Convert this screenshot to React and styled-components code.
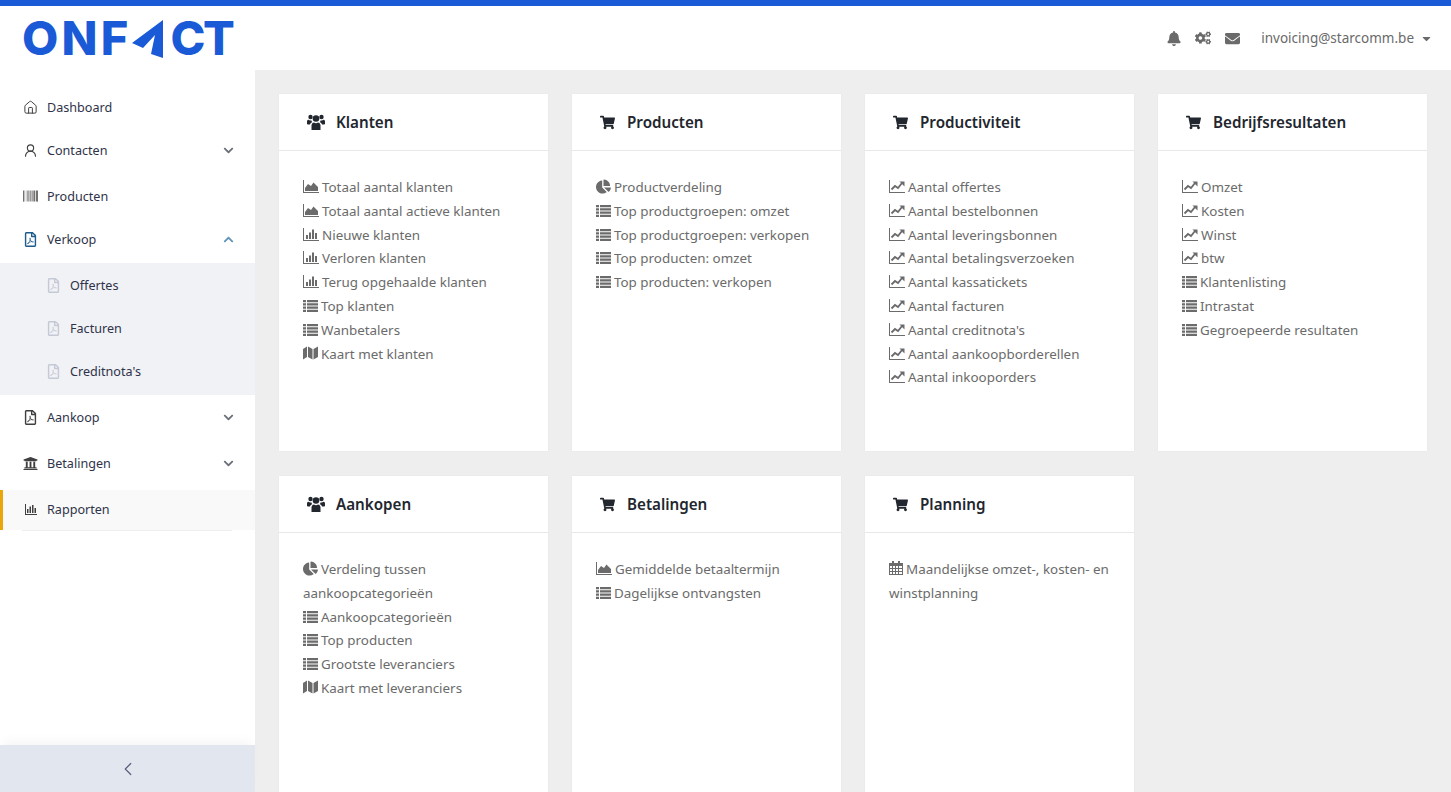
import React from 'react'
import styled, { createGlobalStyle } from 'styled-components'
import {
  FaBell, FaCogs, FaEnvelope, FaCaretDown, FaShoppingCart, FaChartPie,
  FaBarcode, FaRegFilePdf, FaUniversity, FaChevronDown, FaChevronUp,
} from 'react-icons/fa'
import { Home, UserRound, ChevronLeft } from 'lucide-react'

const GlobalStyle = createGlobalStyle`
  html, body { margin: 0; padding: 0; height: 100%; overflow: hidden; }
  body { font-family: "Noto Sans", "Open Sans", sans-serif; background: #eeeeee; }
  * { box-sizing: border-box; }
`

const Page = styled.div`
  height: 100vh;
  display: flex;
  flex-direction: column;
  overflow: hidden;
`

const Header = styled.header`
  height: 70px;
  flex: none;
  border-top: 6px solid #1a5ad7;
  background: #fff;
  display: flex;
  align-items: center;
  justify-content: space-between;
  padding: 0 18px 0 22px;
`

const Logo = styled.div`
  display: flex;
  align-items: center;
  color: #1a5ad7;
  font-family: Inter, "Liberation Sans", sans-serif;
  font-weight: 800;
  font-size: 47px;
  line-height: 36px;
  height: 40px;
`

const LogoText = styled.span`
  letter-spacing: ${p => p.$spacing}px;
`

const LogoMark = styled.svg`
  margin: 2px 6px 0 1px;
  flex: none;
`

const HeaderRight = styled.div`
  display: flex;
  align-items: center;
  color: #6a6a6a;
  font-size: 13.5px;
`

const HeaderIcon = styled.span`
  display: flex;
  width: ${p => p.$w}px;
  margin-left: ${p => p.$ml || 0}px;
  justify-content: center;
  font-size: ${p => p.$size}px;
`

const UserName = styled.span`
  margin-left: 21px;
`

const Caret = styled.span`
  display: flex;
  margin-left: 6px;
  font-size: 13px;
`

const Body = styled.div`
  flex: 1;
  display: flex;
  min-height: 0;
`

const Sidebar = styled.aside`
  width: 255px;
  flex: none;
  background: #fff;
  display: flex;
  flex-direction: column;
  padding-top: 15px;
`

const NavItem = styled.div`
  height: ${p => p.$h}px;
  flex: none;
  display: flex;
  align-items: center;
  padding-left: 23px;
  padding-right: 21px;
  font-size: 12.6px;
  color: #2f3349;
  margin-bottom: ${p => p.$mb || 0}px;
`

const ActiveItem = styled(NavItem)`
  background: #f9f9f9;
  border-left: 3px solid #e8a60c;
  padding-left: 20px;
  padding-bottom: 2px;
  position: relative;
  &::after {
    content: '';
    position: absolute;
    left: 19px;
    right: 23px;
    bottom: -1px;
    height: 1px;
    background: #eceef2;
  }
`

const NavIcon = styled.span`
  width: 24px;
  flex: none;
  display: flex;
  justify-content: center;
  padding-right: 9px;
  color: ${p => p.$color || '#3f3f3f'};
  font-size: ${p => p.$size || 14}px;
`

const NavLabel = styled.span`
  flex: 1;
`

const Chevron = styled.span`
  display: flex;
  font-size: 11px;
  color: ${p => p.$color || '#6b6f7a'};
`

const SubMenu = styled.div`
  flex: none;
  background: #f1f2f6;
  padding: 1px 0 2px;
`

const SubItem = styled.div`
  height: 43px;
  display: flex;
  align-items: center;
  padding-left: 47px;
  font-size: 12.6px;
  color: #2f3349;
`

const SubIcon = styled.span`
  width: 24px;
  display: flex;
  color: #c4c9d5;
  font-size: 15px;
  margin-left: -1px;
  padding-right: 1px;
`

const Collapse = styled.div`
  margin-top: auto;
  height: 47px;
  flex: none;
  background: #e2e6ee;
  box-shadow: 0 -8px 10px -4px rgba(0, 0, 0, 0.04);
  display: flex;
  align-items: center;
  justify-content: center;
  color: #5b5f7c;
`

const Content = styled.main`
  flex: 1;
  padding: 24px 24px 0;
  overflow: hidden;
  display: grid;
  grid-template-columns: repeat(4, 269px);
  grid-auto-rows: 357px;
  column-gap: 24px;
  row-gap: 25px;
`

const Card = styled.section`
  background: #fff;
  box-shadow: 0 0 1px rgba(0, 0, 0, 0.08);
`

const CardHead = styled.div`
  height: 57px;
  border-bottom: 1px solid #e7e8ea;
  display: flex;
  align-items: center;
  padding-left: 28px;
  font-size: 15.2px;
  font-weight: 600;
  color: #22262e;
`

const HeadIcon = styled.span`
  display: flex;
  margin-right: ${p => p.$gap}px;
  font-size: ${p => p.$size}px;
`

const CardBody = styled.div`
  padding: 25px 20px 24px 24px;
`

const Line = styled.div`
  font-size: 13.4px;
  line-height: 23.8px;
  color: #6b6b6b;
`

const ListIcon = styled.svg`
  display: inline-block;
  vertical-align: -1px;
  margin-right: 3px;
  fill: currentColor;
`

const PieWrap = styled.span`
  display: inline-flex;
  vertical-align: -2px;
  margin-right: 3px;
  font-size: 15px;
`

const Area = () => (
  <ListIcon width="16" height="13" viewBox="0 0 16 13">
    <path d="M0 0h1v12h15v1H0z" />
    <path d="M2 11V8l3-4 3 2 2.500-3.500L15 7v4z" />
  </ListIcon>
)
const Bars = () => (
  <ListIcon width="16" height="13" viewBox="0 0 16 13">
    <path d="M0 0h1v12h15v1H0z" />
    <path d="M3 7h2v4H3zM6 4.500h2V11H6zM9 1.500h2V11H9zM12 5h2v6h-2z" />
  </ListIcon>
)
const Trend = () => (
  <ListIcon width="16" height="13" viewBox="0 0 16 13">
    <path d="M0 0h1v12h15v1H0z" />
    <path d="M2.500 9.500 6 6l3 2 4-5" fill="none" stroke="currentColor" strokeWidth="1.8" />
    <path d="M10.500 1.500H15.500V6.500z" />
  </ListIcon>
)
const Rows = () => (
  <ListIcon width="15" height="12" viewBox="0 0 15 12">
    <path d="M0 0h3v2.300H0zM4 0h11v2.300H4zM0 3.200h3v2.300H0zM4 3.200h11v2.300H4zM0 6.500h3v2.300H0zM4 6.500h11v2.300H4zM0 9.700h3V12H0zM4 9.700h11V12H4z" />
  </ListIcon>
)
const Calendar = () => (
  <ListIcon width="14" height="14" viewBox="0 0 14 14">
    <path fillRule="evenodd" d="M3 0h2v2h4V0h2v2h3v12H0V2h3zM1 5v2h2V5zm3 0v2h2V5zm3 0v2h2V5zm3 0v2h3V5zM1 8v2h2V8zm3 0v2h2V8zm3 0v2h2V8zm3 0v2h3V8zm-9 3v2h2v-2zm3 0v2h2v-2zm3 0v2h2v-2zm3 0v2h3v-2z" />
  </ListIcon>
)
const MapIcon = () => (
  <ListIcon width="15" height="14" viewBox="0 0 15 14">
    <path d="M0 3 4 .5v10.500L0 13.500zM5 .5l4.500 2.500v10.500L5 11zM10.500 3 15 .5v10.500l-4.500 2.500z" />
  </ListIcon>
)
const Pie = () => <PieWrap><FaChartPie /></PieWrap>

const Users = () => (
  <svg width="18" height="16" viewBox="0 0 18 16" fill="currentColor">
    <circle cx="9" cy="4.500" r="3.300" />
    <circle cx="3.500" cy="3" r="2.200" />
    <circle cx="14.500" cy="3" r="2.200" />
    <path d="M4.500 16V11.500C4.500 9.500 6 8.500 7 8.500c.6.500 1.300.7 2 .7s1.400-.2 2-.7c1 0 2.500 1 2.500 3V16z" />
    <path d="M0 10V7.500C0 6.300.8 5.700 1.500 5.700c.6.500 1.200.7 2 .7h1c0 .8.300 1.400.9 1.900C4 8.700 3.200 9.500 3 10.500H1c-.6 0-1-.2-1-.5zM18 10V7.500c0-1.200-.8-1.800-1.500-1.800-.6.500-1.200.7-2 .7h-1c0 .8-.3 1.400-.9 1.900 1.400.4 2.200 1.200 2.400 2.200h2c.6 0 1-.2 1-.5z" />
  </svg>
)

const ReportBars = () => (
  <svg width="12" height="11" viewBox="0 0 12 11" fill="currentColor">
    <path d="M0 0h1v10h11v1H0z" />
    <path d="M2 5h1.500v4H2zM4.500 2.500H6V9H4.500zM7 1h1.500v8H7zM9.500 4H11v5H9.500z" />
  </svg>
)

const cards = [
  { title: 'Klanten', head: 'users', items: [
    [Area, 'Totaal aantal klanten'], [Area, 'Totaal aantal actieve klanten'], [Bars, 'Nieuwe klanten'],
    [Bars, 'Verloren klanten'], [Bars, 'Terug opgehaalde klanten'], [Rows, 'Top klanten'],
    [Rows, 'Wanbetalers'], [MapIcon, 'Kaart met klanten'],
  ] },
  { title: 'Producten', head: 'cart', items: [
    [Pie, 'Productverdeling'], [Rows, 'Top productgroepen: omzet'], [Rows, 'Top productgroepen: verkopen'],
    [Rows, 'Top producten: omzet'], [Rows, 'Top producten: verkopen'],
  ] },
  { title: 'Productiviteit', head: 'cart', items: [
    [Trend, 'Aantal offertes'], [Trend, 'Aantal bestelbonnen'], [Trend, 'Aantal leveringsbonnen'],
    [Trend, 'Aantal betalingsverzoeken'], [Trend, 'Aantal kassatickets'], [Trend, 'Aantal facturen'],
    [Trend, "Aantal creditnota's"], [Trend, 'Aantal aankoopborderellen'], [Trend, 'Aantal inkooporders'],
  ] },
  { title: 'Bedrijfsresultaten', head: 'cart', items: [
    [Trend, 'Omzet'], [Trend, 'Kosten'], [Trend, 'Winst'], [Trend, 'btw'], [Rows, 'Klantenlisting'],
    [Rows, 'Intrastat'], [Rows, 'Gegroepeerde resultaten'],
  ] },
  { title: 'Aankopen', head: 'users', items: [
    [Pie, 'Verdeling tussen aankoopcategorieën'], [Rows, 'Aankoopcategorieën'], [Rows, 'Top producten'],
    [Rows, 'Grootste leveranciers'], [MapIcon, 'Kaart met leveranciers'],
  ] },
  { title: 'Betalingen', head: 'cart', items: [
    [Area, 'Gemiddelde betaaltermijn'], [Rows, 'Dagelijkse ontvangsten'],
  ] },
  { title: 'Planning', head: 'cart', items: [
    [Calendar, 'Maandelijkse omzet-, kosten- en winstplanning'],
  ] },
]

export default function App() {
  return (
    <Page>
      <GlobalStyle />
      <Header>
        <Logo>
          <LogoText $spacing={3.2}>ONF</LogoText>
          <LogoMark width="32" height="38" viewBox="0 0 32 38" fill="#1a5ad7">
            <path d="M31 0v38l-12-4 4-19-12 13-11-5z" />
          </LogoMark>
          <LogoText $spacing={-2.5}>CT</LogoText>
        </Logo>
        <HeaderRight>
          <HeaderIcon $w={14} $size={15}><FaBell /></HeaderIcon>
          <HeaderIcon $w={16} $ml={14} $size={18}><FaCogs /></HeaderIcon>
          <HeaderIcon $w={15} $ml={14} $size={15}><FaEnvelope /></HeaderIcon>
          <UserName>invoicing@starcomm.be</UserName>
          <Caret><FaCaretDown /></Caret>
        </HeaderRight>
      </Header>
      <Body>
        <Sidebar>
          <NavItem $h={44}><NavIcon $size={16}><Home size={15} strokeWidth={1.6} /></NavIcon><NavLabel>Dashboard</NavLabel></NavItem>
          <NavItem $h={43}><NavIcon><UserRound size={15} strokeWidth={1.8} /></NavIcon><NavLabel>Contacten</NavLabel><Chevron><FaChevronDown /></Chevron></NavItem>
          <NavItem $h={48}><NavIcon $size={16}><FaBarcode /></NavIcon><NavLabel>Producten</NavLabel></NavItem>
          <NavItem $h={39} $mb={4}><NavIcon $color="#1f5c8b" $size={15}><FaRegFilePdf /></NavIcon><NavLabel>Verkoop</NavLabel><Chevron $color="#5f94b8"><FaChevronUp /></Chevron></NavItem>
          <SubMenu>
            <SubItem><SubIcon><FaRegFilePdf /></SubIcon>Offertes</SubItem>
            <SubItem><SubIcon><FaRegFilePdf /></SubIcon>Facturen</SubItem>
            <SubItem><SubIcon><FaRegFilePdf /></SubIcon>Creditnota's</SubItem>
          </SubMenu>
          <NavItem $h={44}><NavIcon $size={15}><FaRegFilePdf /></NavIcon><NavLabel>Aankoop</NavLabel><Chevron><FaChevronDown /></Chevron></NavItem>
          <NavItem $h={48} $mb={3}><NavIcon $size={15}><FaUniversity /></NavIcon><NavLabel>Betalingen</NavLabel><Chevron><FaChevronDown /></Chevron></NavItem>
          <ActiveItem $h={40}><NavIcon><ReportBars /></NavIcon><NavLabel>Rapporten</NavLabel></ActiveItem>
          <Collapse><ChevronLeft size={22} strokeWidth={1.3} /></Collapse>
        </Sidebar>
        <Content>
          {cards.map(card => (
            <Card key={card.title}>
              <CardHead>
                {card.head === 'users'
                  ? <HeadIcon $gap={11}><Users /></HeadIcon>
                  : <HeadIcon $gap={12} $size={15}><FaShoppingCart /></HeadIcon>}
                {card.title}
              </CardHead>
              <CardBody>
                {card.items.map(([Icon, label]) => (
                  <Line key={label}><Icon />{label}</Line>
                ))}
              </CardBody>
            </Card>
          ))}
        </Content>
      </Body>
    </Page>
  )
}
